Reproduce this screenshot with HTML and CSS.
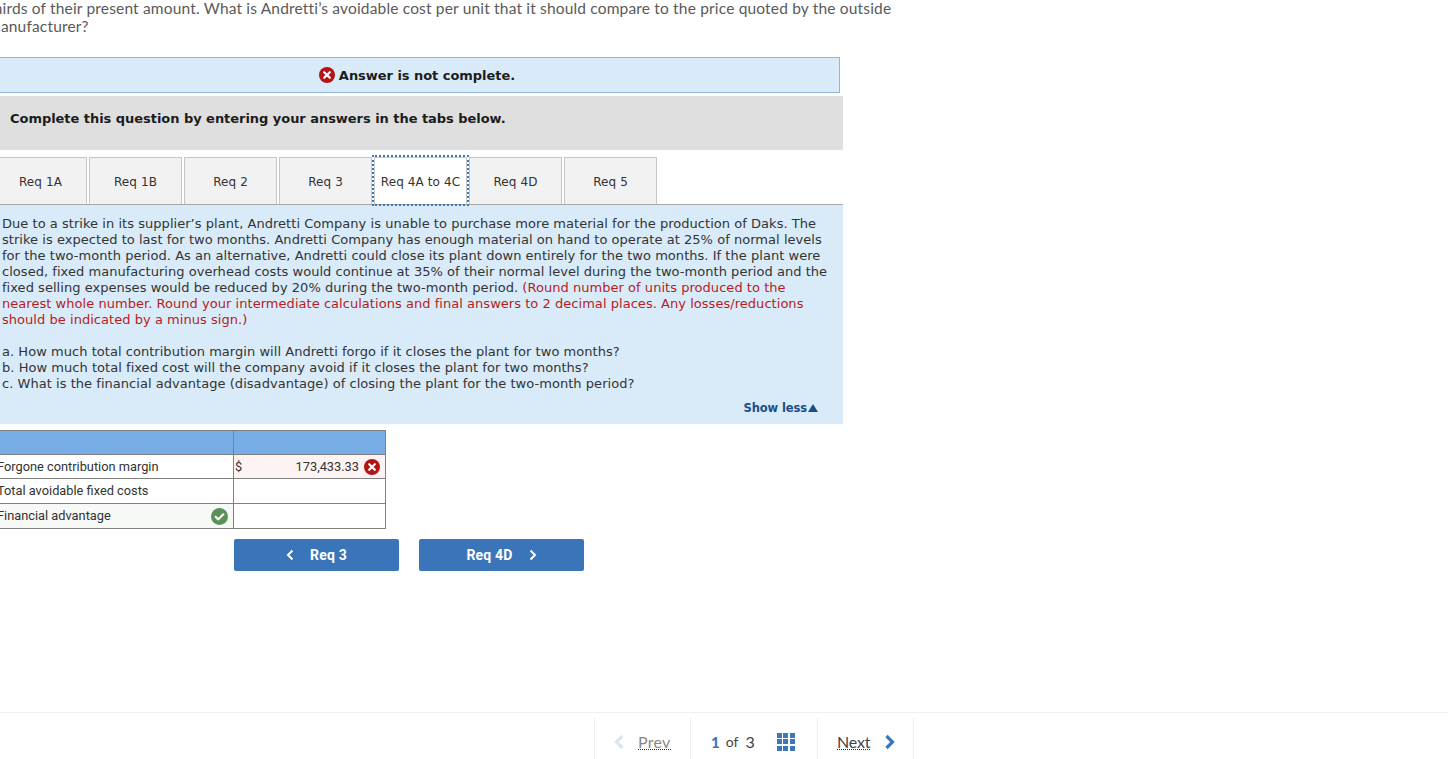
FILE: index.html
```html
<!DOCTYPE html>
<html lang="en">
<head>
<meta charset="utf-8">
<title>Andretti Company</title>
<link rel="stylesheet" href="styles.css">
</head>
<body>
<main class="content">
  <p class="question">thirds of their present amount. What is Andretti’s avoidable cost per unit that it should compare to the price quoted by the outside<br>manufacturer?</p>
  <div class="status">
    <svg class="icon" viewBox="0 0 16 16"><circle cx="8" cy="8" r="8" fill="#b41414"/><path d="M5.2 5.2l5.6 5.6M10.8 5.2l-5.6 5.6" stroke="#fff" stroke-width="2.2" stroke-linecap="round"/></svg>
    <span>Answer is not complete.</span>
  </div>
  <div class="instruction">Complete this question by entering your answers in the tabs below.</div>
  <nav class="tabs">
    <div class="tab">Req 1A</div>
    <div class="tab">Req 1B</div>
    <div class="tab">Req 2</div>
    <div class="tab">Req 3</div>
    <div class="tab active">Req 4A to 4C</div>
    <div class="tab">Req 4D</div>
    <div class="tab">Req 5</div>
  </nav>
  <section class="panel">
    <p class="para">Due to a strike in its supplier’s plant, Andretti Company is unable to purchase more material for the production of Daks. The strike is expected to last for two months. Andretti Company has enough material on hand to operate at 25% of normal levels for the two-month period. As an alternative, Andretti could close its plant down entirely for the two months. If the plant were closed, fixed manufacturing overhead costs would continue at 35% of their normal level during the two-month period and the fixed selling expenses would be reduced by 20% during the two-month period. <span class="red">(Round number of units produced to the nearest whole number. Round your intermediate calculations and final answers to 2 decimal places. Any losses/reductions should be indicated by a minus sign.)</span></p>
    <p class="para">a. How much total contribution margin will Andretti forgo if it closes the plant for two months?<br>b. How much total fixed cost will the company avoid if it closes the plant for two months?<br>c. What is the financial advantage (disadvantage) of closing the plant for the two-month period?</p>
    <div class="show-less">Show less<span class="tri"></span></div>
  </section>
  <table class="answers">
    <tr class="head"><th class="c1"></th><th class="c2"></th></tr>
    <tr class="r1">
      <td class="c1">Forgone contribution margin</td>
      <td class="c2 wrong"><div class="val"><span>$</span><span class="amount">173,433.33</span><svg class="icon" viewBox="0 0 16 16"><circle cx="8" cy="8" r="8" fill="#b41414"/><path d="M5.2 5.2l5.6 5.6M10.8 5.2l-5.6 5.6" stroke="#fff" stroke-width="2.2" stroke-linecap="round"/></svg></div></td>
    </tr>
    <tr class="r2"><td class="c1">Total avoidable fixed costs</td><td class="c2"></td></tr>
    <tr class="r2">
      <td class="c1 right"><div class="lab"><span>Financial advantage</span><svg class="icon" viewBox="0 0 16 16"><circle cx="8" cy="8" r="8" fill="#5a9158"/><path d="M4.4 8.3l2.5 2.4 4.7-4.8" fill="none" stroke="#fff" stroke-width="2" stroke-linecap="round" stroke-linejoin="round"/></svg></div></td>
      <td class="c2"></td>
    </tr>
  </table>
  <div class="buttons">
    <div class="btn"><svg class="chev" viewBox="0 0 8 12"><path d="M6.5 1.5L2 6l4.500 4.500" fill="none" stroke="#fff" stroke-width="2"/></svg><span>Req 3</span></div>
    <div class="btn"><span>Req 4D</span><svg class="chev" viewBox="0 0 8 12"><path d="M1.5 1.5L6 6l-4.500 4.500" fill="none" stroke="#fff" stroke-width="2"/></svg></div>
  </div>
</main>
<footer class="footer">
  <div class="pager">
    <div class="prev"><svg class="pchev" viewBox="0 0 12 16"><path d="M9.500 2L3.500 8l6 6" fill="none" stroke="#dbe6f3" stroke-width="3.200"/></svg><span class="dotted">Prev</span></div>
    <div class="count"><b>1</b><span class="of">of</span><span class="total">3</span>
      <div class="grid"><i></i><i></i><i></i><i></i><i></i><i></i><i></i><i></i><i></i></div>
    </div>
    <div class="next"><span class="dotted">Next</span><svg class="pchev" viewBox="0 0 12 16"><path d="M2.500 2l6 6-6 6" fill="none" stroke="#3a77bb" stroke-width="3.200"/></svg></div>
  </div>
</footer>
</body>
</html>
```

FILE: styles.css
```css
* { box-sizing: border-box; }
html, body { margin: 0; height: 759px; overflow: hidden; background: #fff; }
body { display: flex; flex-direction: column; }
.content { margin-left: -6px; width: 1454px; font-family: "DejaVu Sans", Verdana, sans-serif; }
.question {
  margin: -1px 0 0 -6px;
  font: 15.5px/18px Lato, "Liberation Sans", sans-serif;
  letter-spacing: 0.17px;
  color: #5a5a5a;
  white-space: nowrap;
}
.status {
  margin-top: 22px;
  width: 846px;
  height: 36px;
  background: #d9ebf9;
  border: 1px solid #8db5e0;
  display: flex;
  align-items: center;
  justify-content: center;
  gap: 4px;
  font-size: 13px;
  font-weight: 700;
  letter-spacing: -0.04px;
  color: #1c1c1c;
}
.icon { width: 16px; height: 16px; flex: none; display: block; }
.instruction {
  margin-top: 3px;
  width: 849px;
  height: 54px;
  background: #dfdfdf;
  padding: 0 0 10px 16px;
  display: flex;
  align-items: center;
  font-size: 13px;
  font-weight: 700;
  letter-spacing: -0.04px;
  color: #1c1c1c;
}
.tabs { display: flex; gap: 2px; margin-top: 7px; width: 849px; height: 47px; }
.tab {
  width: 93px;
  height: 47px;
  background: #f2f2f2;
  border: 1px solid #c6c6c6;
  border-bottom: 0;
  display: flex;
  align-items: center;
  justify-content: center;
  font-size: 12px;
  letter-spacing: 0.1px;
  color: #333;
  padding-top: 1px;
}
.tab.active { background: #fff; outline: 2px dotted #3a77bb; outline-offset: 0; position: relative; z-index: 1; }
.panel {
  width: 849px;
  height: 220px;
  background: #d9ebf9;
  border-top: 1px solid #a6a6a6;
  padding: 11px 12px 0 8px;
  font-size: 13px;
  line-height: 16px;
  letter-spacing: 0.04px;
  color: #333;
}
.para { margin: 0 0 16px; }
.red { color: #b71c1c; }
.show-less {
  margin: -8px 13px 0 0;
  display: flex;
  align-items: center;
  justify-content: flex-end;
  gap: 1px;
  font-size: 11.5px;
  font-weight: 700;
  letter-spacing: -0.1px;
  color: #1d4d8a;
}
.tri { width: 0; height: 0; border-left: 5.5px solid transparent; border-right: 5.5px solid transparent; border-bottom: 8px solid #1d4d8a; }
.answers {
  margin-top: 6px;
  border-collapse: collapse;
  table-layout: fixed;
  width: 392px;
  font: 12.8px/15px Roboto, "Liberation Sans", sans-serif;
  color: #333;
}
.answers td, .answers th { border: 1px solid #808080; padding: 0; }
.answers .c1 { width: 239px; padding-left: 2px; }
.answers .c2 { width: 152px; }
.head th { height: 24px; background: #79ade6; }
.r1 td { height: 24px; }
.r2 td { height: 25px; padding-bottom: 2px; }
.wrong { background: #fdf3f2; }
.right { background: #f6f9f6; }
.val { display: flex; align-items: center; padding: 0 5px 0 1px; }
.amount { margin-left: auto; margin-right: 5px; }
.lab { display: flex; align-items: center; justify-content: space-between; padding-right: 5px; }
.lab .icon { width: 17px; height: 17px; margin-bottom: -2px; }
.buttons { display: flex; gap: 20px; margin: 10px 0 0 240px; }
.btn {
  width: 165px;
  height: 32px;
  background: #3a75ba;
  border-radius: 2px;
  color: #fff;
  font: 700 14px Roboto, "Liberation Sans", sans-serif;
  letter-spacing: 0.2px;
  display: flex;
  align-items: center;
  justify-content: center;
  gap: 16px;
}
.chev { width: 8px; height: 12px; display: block; }
.footer { margin-top: auto; height: 47px; border-top: 1px solid #f0f0f0; padding: 5px 0 0 594px; flex: none; }
.pager {
  display: flex;
  height: 42px;
  width: 320px;
  font: 16px Lato, "Liberation Sans", sans-serif;
  color: #444;
}
.prev, .count, .next { display: flex; align-items: center; border-left: 1px solid #eeeeee; padding-top: 6px; }
.prev { width: 96px; padding-left: 18px; gap: 13px; color: #888; }
.count { width: 127px; padding-left: 20px; font-size: 14px; padding-top: 5px; }
.count b { color: #3a77bb; font-size: 15px; font-weight: 900; }
.of { margin-left: 6px; }
.total { margin-left: 7px; font-size: 16px; }
.next { width: 97px; padding-left: 19px; gap: 14px; border-right: 1px solid #eeeeee; }
.dotted { border-bottom: 1px dotted #333; line-height: 14px; letter-spacing: -0.2px; }
.prev .dotted { letter-spacing: 0.3px; }
.pchev { width: 12px; height: 16px; display: block; }
.grid { margin-left: 22px; display: grid; grid-template-columns: repeat(3, 5px); grid-auto-rows: 5px; gap: 1.5px; }
.grid i { background: #3a77bb; display: block; }
```
